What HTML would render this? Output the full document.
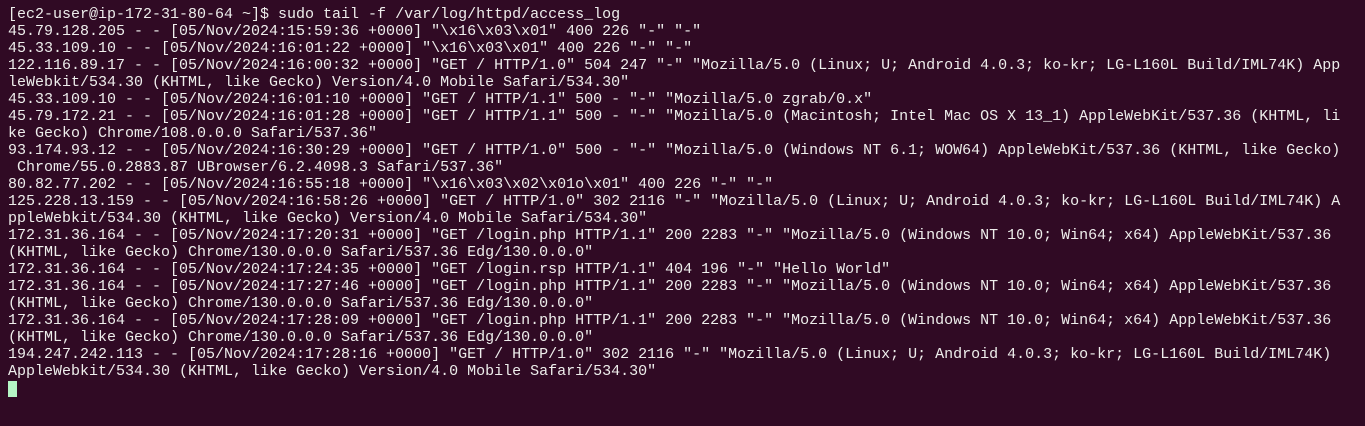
<!DOCTYPE html>
<html><head><meta charset="utf-8"><style>
html,body{margin:0;padding:0;background:#300a24;width:1365px;height:426px;overflow:hidden}
pre{margin:0;position:absolute;left:8px;top:6px;font-family:"Liberation Mono","DejaVu Sans Mono",monospace;font-size:15px;line-height:17px;color:#eeeeec;white-space:pre}
.cur{display:inline-block;width:9px;height:16px;background:#b5f5c5;vertical-align:top;margin-top:1px}
</style></head><body><pre>[ec2-user@ip-172-31-80-64 ~]$ sudo tail -f /var/log/httpd/access_log
45.79.128.205 - - [05/Nov/2024:15:59:36 +0000] "\x16\x03\x01" 400 226 "-" "-"
45.33.109.10 - - [05/Nov/2024:16:01:22 +0000] "\x16\x03\x01" 400 226 "-" "-"
122.116.89.17 - - [05/Nov/2024:16:00:32 +0000] "GET / HTTP/1.0" 504 247 "-" "Mozilla/5.0 (Linux; U; Android 4.0.3; ko-kr; LG-L160L Build/IML74K) App
leWebkit/534.30 (KHTML, like Gecko) Version/4.0 Mobile Safari/534.30"
45.33.109.10 - - [05/Nov/2024:16:01:10 +0000] "GET / HTTP/1.1" 500 - "-" "Mozilla/5.0 zgrab/0.x"
45.79.172.21 - - [05/Nov/2024:16:01:28 +0000] "GET / HTTP/1.1" 500 - "-" "Mozilla/5.0 (Macintosh; Intel Mac OS X 13_1) AppleWebKit/537.36 (KHTML, li
ke Gecko) Chrome/108.0.0.0 Safari/537.36"
93.174.93.12 - - [05/Nov/2024:16:30:29 +0000] "GET / HTTP/1.0" 500 - "-" "Mozilla/5.0 (Windows NT 6.1; WOW64) AppleWebKit/537.36 (KHTML, like Gecko)
 Chrome/55.0.2883.87 UBrowser/6.2.4098.3 Safari/537.36"
80.82.77.202 - - [05/Nov/2024:16:55:18 +0000] "\x16\x03\x02\x01o\x01" 400 226 "-" "-"
125.228.13.159 - - [05/Nov/2024:16:58:26 +0000] "GET / HTTP/1.0" 302 2116 "-" "Mozilla/5.0 (Linux; U; Android 4.0.3; ko-kr; LG-L160L Build/IML74K) A
ppleWebkit/534.30 (KHTML, like Gecko) Version/4.0 Mobile Safari/534.30"
172.31.36.164 - - [05/Nov/2024:17:20:31 +0000] "GET /login.php HTTP/1.1" 200 2283 "-" "Mozilla/5.0 (Windows NT 10.0; Win64; x64) AppleWebKit/537.36
(KHTML, like Gecko) Chrome/130.0.0.0 Safari/537.36 Edg/130.0.0.0"
172.31.36.164 - - [05/Nov/2024:17:24:35 +0000] "GET /login.rsp HTTP/1.1" 404 196 "-" "Hello World"
172.31.36.164 - - [05/Nov/2024:17:27:46 +0000] "GET /login.php HTTP/1.1" 200 2283 "-" "Mozilla/5.0 (Windows NT 10.0; Win64; x64) AppleWebKit/537.36
(KHTML, like Gecko) Chrome/130.0.0.0 Safari/537.36 Edg/130.0.0.0"
172.31.36.164 - - [05/Nov/2024:17:28:09 +0000] "GET /login.php HTTP/1.1" 200 2283 "-" "Mozilla/5.0 (Windows NT 10.0; Win64; x64) AppleWebKit/537.36
(KHTML, like Gecko) Chrome/130.0.0.0 Safari/537.36 Edg/130.0.0.0"
194.247.242.113 - - [05/Nov/2024:17:28:16 +0000] "GET / HTTP/1.0" 302 2116 "-" "Mozilla/5.0 (Linux; U; Android 4.0.3; ko-kr; LG-L160L Build/IML74K)
AppleWebkit/534.30 (KHTML, like Gecko) Version/4.0 Mobile Safari/534.30"
<span class="cur"></span></pre></body></html>
